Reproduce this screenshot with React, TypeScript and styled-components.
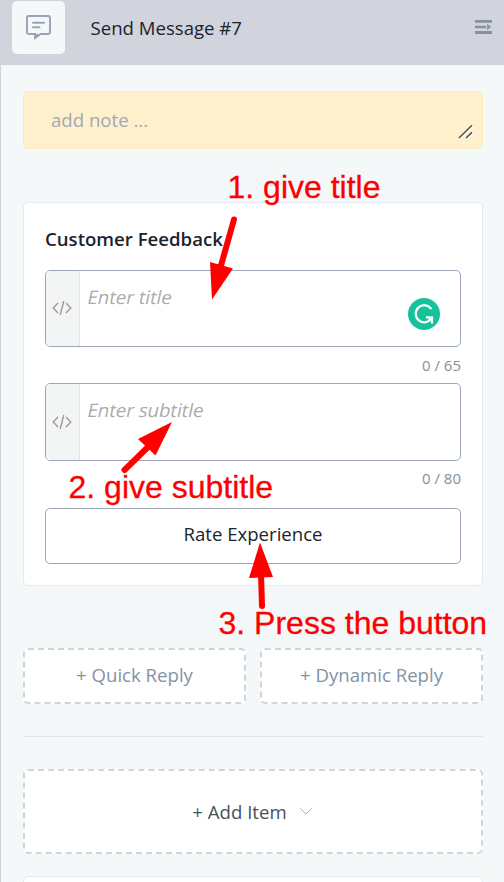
import React from "react";
import styled, { createGlobalStyle } from "styled-components";

const GlobalStyle = createGlobalStyle`
  *, *::before, *::after { box-sizing: border-box; }
  body { margin: 0; background: #f4f8f9; font-family: "Open Sans", "Noto Sans", sans-serif; }
  button, textarea { font: inherit; margin: 0; }
`;

const Panel = styled.div`
  position: relative;
  width: 504px;
  height: 882px;
  overflow: hidden;
  background: #f4f8f9;
  color: #1b232e;
`;

const Header = styled.header`
  display: flex;
  align-items: flex-start;
  height: 65px;
  padding: 1px 12px 0;
  background: #d1d4dc;
`;

const IconTile = styled.div`
  display: flex;
  width: 53px;
  height: 53px;
  padding: 14px 0 0 14px;
  border-radius: 5px;
  background: #f4f8f9;
`;

const Title = styled.h1`
  flex: 1;
  margin: 0 0 0 25.5px;
  font-size: 18.6px;
  font-weight: 400;
  line-height: 54px;
`;

const MenuButton = styled.button`
  display: flex;
  padding: 0;
  margin-top: 19px;
  border: 0;
  background: none;
`;

const Body = styled.main`
  display: flex;
  flex-direction: column;
  height: 817px;
  padding: 26px 21px 0 22px;
  border-left: 1px solid #cfd3de;
`;

const Note = styled.div`
  display: flex;
  justify-content: space-between;
  flex: none;
  height: 58px;
  padding: 0 8px 0 27px;
  border: 1px solid #feeabb;
  border-radius: 5px;
  background: #fff0cd;
  color: #a0a9b2;
  font-size: 18.6px;
  line-height: 55px;
  svg { margin-top: 32px; }
`;

const Card = styled.section`
  display: flex;
  flex-direction: column;
  flex: none;
  height: 384px;
  margin-top: 53px;
  padding: 23px 21px 0;
  border: 1px solid #e5eaf1;
  border-radius: 5px;
  background: #fff;
`;

const CardTitle = styled.h2`
  margin: 0;
  height: 44px;
  font-size: 18.6px;
  font-weight: 600;
  line-height: 26px;
`;

const Field = styled.div<{ $height: number }>`
  display: flex;
  flex: none;
  height: ${(p) => p.$height}px;
  border: 1px solid #9ca8b7;
  border-radius: 5px;
  overflow: hidden;
`;

const CodeTab = styled.div`
  display: flex;
  align-items: center;
  justify-content: center;
  width: 34px;
  padding: 0 2px 1px 0;
  border-right: 1px solid #dfe3e8;
  background: #f3f4f4;
`;

const Placeholder = styled.div`
  flex: 1;
  padding: 13px 0 0 8px;
  color: #aaaaaa;
  font-size: 18.6px;
  line-height: 25px;
`;

const Slanted = styled.span`
  display: inline-block;
  transform: skewX(-12deg);
`;

const AssistantBadge = styled.span`
  margin: 27px 20px 0 0;
  height: 32px;
`;

const Counter = styled.div<{ $height: number }>`
  flex: none;
  height: ${(p) => p.$height}px;
  padding-top: ${(p) => p.$height - 28}px;
  color: #85919e;
  font-size: 15px;
  line-height: 20px;
  text-align: right;
`;

const ActionButton = styled.button`
  flex: none;
  height: 56px;
  margin-top: 12px;
  padding: 0 0 5px;
  border: 1px solid #9ca8b7;
  border-radius: 5px;
  background: #fff;
  color: #1b232e;
  font-size: 18.6px;
`;

const ReplyRow = styled.div`
  display: grid;
  grid-template-columns: 223px 223px;
  gap: 14px;
  margin-top: 62px;
`;

const DashedButton = styled.button<{ $tall?: boolean }>`
  display: flex;
  align-items: center;
  justify-content: center;
  flex: none;
  gap: 13px;
  height: ${(p) => (p.$tall ? 85 : 56)}px;
  padding: ${(p) => (p.$tall ? "0 2px 0 0" : "0 0 3px")};
  border: 2px dashed #d1d4dc;
  border-radius: 5px;
  background: #fff;
  color: ${(p) => (p.$tall ? "#47525b" : "#8492a6")};
  font-size: 18.6px;
`;

const Divider = styled.hr`
  flex: none;
  width: 100%;
  height: 1px;
  margin: 32px 0;
  border: 0;
  background: #e0e6ed;
`;

const NextCard = styled.div`
  flex: none;
  height: 40px;
  margin-top: 22px;
  border: 1px solid #e5eaf1;
  border-radius: 5px;
  background: #fff;
`;

const Callout = styled.div<{ $x: number; $y: number }>`
  position: absolute;
  left: ${(p) => p.$x}px;
  top: ${(p) => p.$y}px;
  color: #fe0000;
  font-family: "Liberation Sans", Arial, sans-serif;
  font-size: 32px;
  line-height: 36px;
  -webkit-text-stroke: 0.3px #fe0000;
  white-space: nowrap;
`;

const Arrows = styled.svg`
  position: absolute;
  inset: 0;
  pointer-events: none;
`;

const MessageIcon = () => (
  <svg width="26" height="26" viewBox="0 0 26 26" fill="none" stroke="#9aa6b5" strokeWidth="2">
    <path d="M2.2 1H22a2 2 0 0 1 2 2V17a2 2 0 0 1-2 2H14.5L9 23V19H2.5a1.6 1.6 0 0 1-1.5-1.7V2.5A1.5 1.5 0 0 1 2.2 1Z" />
    <path d="M7 7.8H18M7 12.2H13.5" strokeLinecap="round" />
    <path d="M8 19h7l-6 5z" fill="#9aa6b5" stroke="none" />
  </svg>
);

const MenuIcon = () => (
  <svg width="17" height="14" viewBox="0 0 17 14" fill="#84939e">
    <path d="M0 0h17v2.8H0zM0 5.7h11v2.5H0zM12 4l4.3 3-4.3 3zM0 11.1h17v2.8H0z" />
  </svg>
);

const GripIcon = () => (
  <svg width="16" height="15" viewBox="0 0 16 15" fill="none">
    <path d="M2.5 15L15.5 2M9.5 15L15.5 9" stroke="#fff" strokeWidth="1.5" />
    <path d="M1 14L14 1.3M8 14L14 8.3" stroke="#5b554b" strokeWidth="1.6" />
  </svg>
);

const CodeIcon = () => (
  <svg width="20" height="16" viewBox="0 0 20 16" fill="none" stroke="#9b9b9b" strokeWidth="1.4">
    <path d="M6 3L1.2 8L6 13M14 3L18.8 8L14 13M11.8 1L8.2 15" />
  </svg>
);

const AssistantIcon = () => (
  <svg width="32" height="32" viewBox="0 0 32 32">
    <circle cx="16" cy="16" r="16" fill="#15c39a" />
    <g fill="none" stroke="#fff" strokeWidth="2.2">
      <path d="M23.4 11.2A8.5 8.5 0 1 0 23.6 20" />
      <path d="M18 19.4H24V25.5" />
      <path d="M23.8 19.6L20.6 23" />
    </g>
  </svg>
);

const ChevronIcon = () => (
  <svg width="12" height="7" viewBox="0 0 12 7" fill="none" stroke="#a4afbd" strokeWidth="1">
    <path d="M.3.5L6 6L11.7.5" />
  </svg>
);

export default function App() {
  return (
    <Panel>
      <GlobalStyle />
      <Header>
        <IconTile><MessageIcon /></IconTile>
        <Title>Send Message #7</Title>
        <MenuButton aria-label="Toggle panel"><MenuIcon /></MenuButton>
      </Header>
      <Body>
        <Note>add note ...<GripIcon /></Note>
        <Card>
          <CardTitle>Customer Feedback</CardTitle>
          <Field $height={77}>
            <CodeTab><CodeIcon /></CodeTab>
            <Placeholder><Slanted>Enter title</Slanted></Placeholder>
            <AssistantBadge><AssistantIcon /></AssistantBadge>
          </Field>
          <Counter $height={36}>0 / 65</Counter>
          <Field $height={78}>
            <CodeTab><CodeIcon /></CodeTab>
            <Placeholder><Slanted>Enter subtitle</Slanted></Placeholder>
          </Field>
          <Counter $height={35}>0 / 80</Counter>
          <ActionButton>Rate Experience</ActionButton>
        </Card>
        <ReplyRow>
          <DashedButton>+ Quick Reply</DashedButton>
          <DashedButton>+ Dynamic Reply</DashedButton>
        </ReplyRow>
        <Divider />
        <DashedButton $tall>+ Add Item<ChevronIcon /></DashedButton>
        <NextCard />
      </Body>
      <Callout $x={227.5} $y={169}>1. give title</Callout>
      <Callout $x={68.5} $y={469}>2. give subtitle</Callout>
      <Callout $x={218.5} $y={605}>3. Press the button</Callout>
      <Arrows width="504" height="882" viewBox="0 0 504 882" fill="#fe0000" stroke="#fe0000">
        <path d="M234 219.5L220 269M124.5 470L148 447M262 606L261 574" fill="none" strokeWidth="6" strokeLinecap="round" />
        <path d="M212 299.5L210 262L233 268.5ZM172 422L138 439L155.5 455.5ZM260 542.5L249 578L273 577Z" stroke="none" />
      </Arrows>
    </Panel>
  );
}
